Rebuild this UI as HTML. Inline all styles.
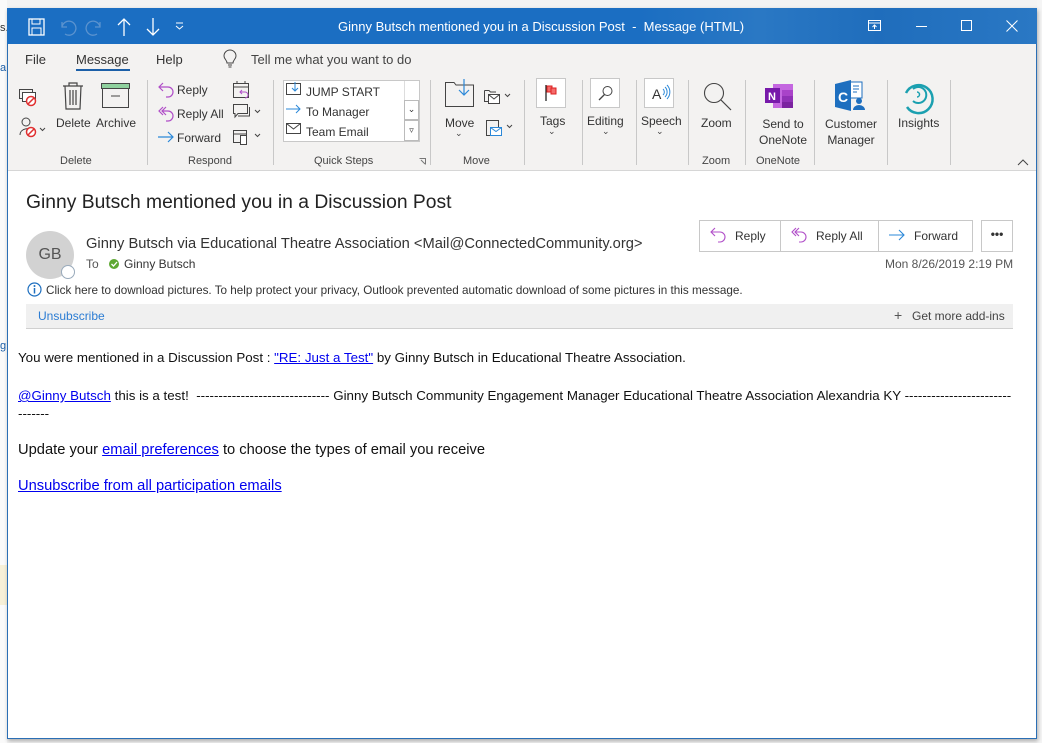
<!DOCTYPE html>
<html><head><meta charset="utf-8"><style>
*{margin:0;padding:0;box-sizing:border-box}
body{width:1042px;height:743px;overflow:hidden;background:#f3f3f3;font-family:"Liberation Sans",Arial,sans-serif;position:relative}
.a{position:absolute;white-space:nowrap}
.t{font-size:12px;color:#333}
.gl{font-size:11px;color:#444;top:155px}
.sep{position:absolute;top:80px;width:1px;height:85px;background:#c8c8c8}
svg{position:absolute;overflow:visible}
a{color:#0000ee}
</style></head><body>
<div class="a" style="left:0;top:0;width:7px;height:743px;background:#fafafa"></div>
<div class="a" style="left:0;top:22px;font-size:11px;color:#333">s.</div>
<div class="a" style="left:0;top:62px;font-size:11px;color:#1c5fa8">a</div>
<div class="a" style="left:0;top:340px;font-size:11px;color:#1c5fa8">g</div>
<div class="a" style="left:0;top:565px;width:7px;height:40px;background:#f7f0d8"></div>
<div class="a" style="left:1037px;top:0;width:5px;height:743px;background:#f5f5f5"></div>
<div class="a" style="left:7px;top:8px;width:1030px;height:731px;background:#fff;border:1px solid #2b6fb5;box-shadow:1px 2px 4px rgba(0,0,0,.3)"></div>
<div class="a" style="left:7px;top:8px;width:1030px;height:36px;background:#1b6ec2"></div>
<div class="a" style="left:640px;top:8px;width:397px;height:36px;background:linear-gradient(90deg,#1b6ec2,#2a78c4 30%,#1f6dbc 60%,#2a78c4)"></div>
<div class="a" style="left:338px;top:19px;font-size:13px;color:#fff">Ginny Butsch mentioned you in a Discussion Post&nbsp; - &nbsp;Message (HTML)</div>
<svg style="left:28px;top:18px" width="18" height="18"><rect x="1" y="1" width="15" height="16" fill="none" stroke="#fff" stroke-width="1.3"/><rect x="4" y="1" width="8" height="5" fill="none" stroke="#fff"/><rect x="4" y="10" width="9" height="7" fill="none" stroke="#fff"/></svg>
<svg style="left:58px;top:18px" width="18" height="18"><path d="M4 4 L4 9 L9 9 M4 9 A7 7 0 1 1 7 16" fill="none" stroke="#5b93cf" stroke-width="1.3"/></svg>
<svg style="left:86px;top:18px" width="18" height="18"><path d="M14 4 L14 9 L9 9 M14 9 A7 7 0 1 0 11 16" fill="none" stroke="#5b93cf" stroke-width="1.3"/></svg>
<svg style="left:116px;top:17px" width="16" height="20"><path d="M8 2 L8 19 M2 8 L8 2 L14 8" fill="none" stroke="#fff" stroke-width="1.3"/></svg>
<svg style="left:145px;top:17px" width="16" height="20"><path d="M8 1 L8 18 M2 12 L8 18 L14 12" fill="none" stroke="#fff" stroke-width="1.3"/></svg>
<svg style="left:175px;top:22px" width="10" height="8"><path d="M1 1 H8 M1 4 L4.5 7 L8 4" fill="none" stroke="#fff"/></svg>
<svg style="left:868px;top:20px" width="14" height="12"><rect x="0.5" y="0.5" width="12" height="10" fill="none" stroke="#fff"/><path d="M0.5 3 H12.5 M6.5 9 V5 M4.5 7 L6.5 5 L8.5 7" fill="none" stroke="#fff"/></svg>
<div class="a" style="left:916px;top:26px;width:11px;height:1px;background:#fff"></div>
<div class="a" style="left:961px;top:20px;width:11px;height:11px;border:1px solid #fff"></div>
<svg style="left:1006px;top:20px" width="12" height="12"><path d="M0.5 0.5 L11.5 11.5 M11.5 0.5 L0.5 11.5" stroke="#fff"/></svg>
<div class="a" style="left:8px;top:44px;width:1028px;height:127px;background:#f3f2f1;border-bottom:1px solid #d6d6d6"></div>
<div class="a" style="left:25px;top:52px;font-size:13px;color:#333">File</div>
<div class="a" style="left:76px;top:52px;font-size:13px;color:#333">Message</div>
<div class="a" style="left:76px;top:69px;width:54px;height:2px;background:#1b5fa8"></div>
<div class="a" style="left:156px;top:52px;font-size:13px;color:#333">Help</div>
<svg style="left:223px;top:51px" width="14" height="18"><path d="M4 12 C4 9 1 8 1 5 A6 6 0 0 1 13 5 C13 8 10 9 10 12 Z M5 14 H9 M5.5 16 H8.5" fill="none" stroke="#444"/></svg>
<div class="a" style="left:251px;top:52px;font-size:13px;color:#444">Tell me what you want to do</div>
<svg style="left:19px;top:89px" width="18" height="18"><rect x="0.5" y="0.5" width="13" height="9" fill="none" stroke="#444"/><rect x="3.5" y="3.5" width="13" height="9" fill="#fff" stroke="#444"/><circle cx="12" cy="12" r="4.5" fill="#fff" stroke="#e03030" stroke-width="1.5"/><path d="M9 15 L15 9" stroke="#e03030" stroke-width="1.5"/></svg>
<svg style="left:19px;top:117px" width="30" height="22"><circle cx="7" cy="5" r="4" fill="none" stroke="#444"/><path d="M1 18 C1 11 12 10 13 14" fill="none" stroke="#444"/><circle cx="12" cy="15" r="4.5" fill="#fff" stroke="#e03030" stroke-width="1.5"/><path d="M9 18 L15 12" stroke="#e03030" stroke-width="1.5"/><path d="M21 11 L23.5 13.5 L26 11" fill="none" stroke="#444"/></svg>
<svg style="left:61px;top:82px" width="24" height="28"><path d="M2 4 H22 M8 4 V1 H16 V4 M4 4 L5 27 H19 L20 4 M9 8 V23 M12 8 V23 M15 8 V23" fill="none" stroke="#444" stroke-width="1.2"/></svg>
<div class="a t" style="left:56px;top:116px">Delete</div>
<svg style="left:101px;top:83px" width="30" height="26"><rect x="0.5" y="0.5" width="28" height="5" fill="#8fd19e" stroke="#444"/><rect x="1.5" y="5.5" width="26" height="19" fill="none" stroke="#444"/><path d="M10 13 H19" stroke="#444"/></svg>
<div class="a t" style="left:96px;top:116px">Archive</div>
<div class="a gl" style="left:60px">Delete</div>
<div class="sep" style="left:147px"></div>
<svg style="left:157px;top:81px" width="18" height="18"><path d="M6 2 L2 6 L6 10 M2 6 H11 A5 5 0 0 1 11 16 H9" fill="none" stroke="#b04ec8" stroke-width="1.2"/></svg>
<div class="a t" style="left:177px;top:83px">Reply</div>
<svg style="left:157px;top:105px" width="18" height="18"><path d="M6 2 L2 6 L6 10 M9 2 L5 6 L9 10 M5 6 H11 A5 5 0 0 1 11 16 H9" fill="none" stroke="#b04ec8" stroke-width="1.2"/></svg>
<div class="a t" style="left:177px;top:107px">Reply All</div>
<svg style="left:157px;top:129px" width="18" height="16"><path d="M1 8 H16 M11 3 L16 8 L11 13" fill="none" stroke="#2b88d8" stroke-width="1.2"/></svg>
<div class="a t" style="left:177px;top:131px">Forward</div>
<svg style="left:233px;top:81px" width="18" height="18"><rect x="0.5" y="2.5" width="15" height="14" fill="none" stroke="#444"/><path d="M0.5 6 H15.5 M4 0 V3 M12 0 V3" stroke="#444"/><path d="M9 9 L7 11 L9 13 M7 11 H12 A3 3 0 0 1 12 17" fill="none" stroke="#b04ec8"/></svg>
<svg style="left:233px;top:104px" width="30" height="18"><path d="M0.5 0.5 H14.5 V9.5 H5 L2 13 V9.5 H0.5 Z M5 12 H16.5 V3" fill="none" stroke="#444"/><path d="M22 6 L24.5 8.5 L27 6" fill="none" stroke="#444"/></svg>
<svg style="left:233px;top:128px" width="30" height="18"><rect x="0.5" y="2.5" width="13" height="12" fill="none" stroke="#444"/><path d="M0.5 6 H13.5" stroke="#444"/><rect x="7.5" y="7.5" width="6" height="9" fill="#fff" stroke="#444"/><path d="M22 6 L24.5 8.5 L27 6" fill="none" stroke="#444"/></svg>
<div class="a gl" style="left:188px">Respond</div>
<div class="sep" style="left:273px"></div>
<div class="a" style="left:283px;top:80px;width:137px;height:62px;background:#fff;border:1px solid #c8c8c8"></div>
<div class="a" style="left:404px;top:81px;width:15px;height:60px;border-left:1px solid #ddd"></div>
<div class="a" style="left:404px;top:100px;width:15px;height:20px;border:1px solid #bbb;background:#fff;font-size:9px;text-align:center;line-height:16px;color:#333">⌄</div>
<div class="a" style="left:404px;top:120px;width:15px;height:21px;border:1px solid #bbb;background:#fff;font-size:9px;text-align:center;line-height:18px;color:#333">▿</div>
<svg style="left:286px;top:82px" width="16" height="14"><rect x="0.5" y="1.5" width="14" height="11" fill="none" stroke="#444"/><path d="M9 0 V9 M6 6 L9 9 L12 6" fill="none" stroke="#2b88d8"/></svg>
<div class="a t" style="left:306px;top:85px">JUMP START</div>
<svg style="left:286px;top:104px" width="16" height="10"><path d="M0 5 H14 M10 1 L14 5 L10 9" fill="none" stroke="#2b88d8"/></svg>
<div class="a t" style="left:306px;top:105px">To Manager</div>
<svg style="left:286px;top:123px" width="16" height="12"><rect x="0.5" y="0.5" width="14" height="10" fill="none" stroke="#444"/><path d="M0.5 0.5 L7.5 6 L14.5 0.5" fill="none" stroke="#444"/></svg>
<div class="a t" style="left:306px;top:125px">Team Email</div>
<div class="a gl" style="left:314px">Quick Steps</div>
<svg style="left:419px;top:158px" width="7" height="7"><path d="M0.5 0.5 H6.5 V6.5 M2 2 L6 6" fill="none" stroke="#777"/></svg>
<div class="sep" style="left:430px"></div>
<svg style="left:445px;top:79px" width="30" height="28"><path d="M0.5 3.5 H9 L11 6 H28.5 V27.5 H0.5 Z" fill="none" stroke="#444"/><path d="M19 0 V16 M14 11 L19 16 L24 11" fill="none" stroke="#2b88d8" stroke-width="1.2"/></svg>
<div class="a t" style="left:445px;top:116px">Move</div>
<div class="a" style="left:455px;top:128px;font-size:9px;color:#444">⌄</div>
<svg style="left:484px;top:88px" width="30" height="18"><path d="M0.5 2.5 H5 L6.5 4 H12 M0.5 2.5 V13.5 H4" fill="none" stroke="#444"/><rect x="4.5" y="6.5" width="11" height="9" fill="#fff" stroke="#444"/><path d="M4.5 6.5 L10 11 L15.5 6.5" fill="none" stroke="#444"/><path d="M21 6 L23.5 8.5 L26 6" fill="none" stroke="#444"/></svg>
<svg style="left:486px;top:119px" width="30" height="20"><rect x="0.5" y="1.5" width="12" height="15" fill="none" stroke="#444"/><rect x="4.5" y="8.5" width="11" height="8" fill="#fff" stroke="#2b88d8"/><path d="M4.5 8.5 L10 12.5 L15.5 8.5" fill="none" stroke="#2b88d8"/><path d="M21 6 L23.5 8.5 L26 6" fill="none" stroke="#444"/></svg>
<div class="a gl" style="left:463px">Move</div>
<div class="sep" style="left:524px"></div>
<div class="a" style="left:536px;top:78px;width:30px;height:30px;border:1px solid #c8c8c8;background:#fff"></div>
<svg style="left:545px;top:84px" width="14" height="18"><path d="M1 1 V17" stroke="#222" stroke-width="1.3"/><rect x="2" y="2" width="5" height="6" fill="#f46b6b" stroke="#d22"/><rect x="6" y="4" width="5" height="6" fill="#f46b6b" stroke="#d22"/></svg>
<div class="a t" style="left:540px;top:114px">Tags</div>
<div class="a" style="left:548px;top:126px;font-size:9px;color:#444">⌄</div>
<div class="sep" style="left:582px"></div>
<div class="a" style="left:590px;top:78px;width:30px;height:30px;border:1px solid #c8c8c8;background:#fff"></div>
<svg style="left:598px;top:85px" width="16" height="16"><circle cx="9.5" cy="6" r="4.5" fill="none" stroke="#444"/><path d="M6.5 9.5 L1 15" stroke="#444" stroke-width="1.3"/></svg>
<div class="a t" style="left:587px;top:114px">Editing</div>
<div class="a" style="left:602px;top:126px;font-size:9px;color:#444">⌄</div>
<div class="sep" style="left:636px"></div>
<div class="a" style="left:644px;top:78px;width:30px;height:30px;border:1px solid #c8c8c8;background:#fff"></div>
<div class="a" style="left:652px;top:86px;font-size:14px;color:#333">A</div>
<svg style="left:662px;top:85px" width="10" height="14"><path d="M1 4 A4 4 0 0 1 1 10 M3 2 A7 7 0 0 1 3 12 M5 0 A10 10 0 0 1 5 14" fill="none" stroke="#2b88d8"/></svg>
<div class="a t" style="left:641px;top:114px">Speech</div>
<div class="a" style="left:656px;top:126px;font-size:9px;color:#444">⌄</div>
<div class="sep" style="left:688px"></div>
<svg style="left:702px;top:82px" width="30" height="30"><circle cx="12" cy="11" r="9.5" fill="none" stroke="#444" stroke-width="1.1"/><path d="M19 18 L29 28" stroke="#444" stroke-width="1.2"/></svg>
<div class="a t" style="left:701px;top:116px">Zoom</div>
<div class="a gl" style="left:702px">Zoom</div>
<div class="sep" style="left:745px"></div>
<svg style="left:765px;top:84px" width="30" height="24"><rect x="8" y="0" width="20" height="24" fill="#c467e0"/><rect x="17" y="6" width="11" height="6" fill="#a943c9"/><rect x="17" y="12" width="11" height="6" fill="#9031b6"/><rect x="17" y="18" width="11" height="6" fill="#7b23a0"/><rect x="0" y="4" width="15" height="15" fill="#7719aa"/><text x="3" y="16" font-family="Liberation Sans" font-weight="bold" font-size="11" fill="#fff">N</text></svg>
<div class="a t" style="left:759px;top:116px;text-align:center;line-height:16px">Send to<br>OneNote</div>
<div class="a gl" style="left:756px">OneNote</div>
<div class="sep" style="left:814px"></div>
<svg style="left:835px;top:80px" width="32" height="32"><rect x="15" y="2" width="12" height="16" fill="#fff" stroke="#1e6fbf"/><path d="M18 6 H24 M18 9 H24 M18 12 H22" stroke="#1e6fbf"/><path d="M0 4 L16 0 V31 L0 27 Z" fill="#1e6fbf"/><text x="3" y="22" font-family="Liberation Sans" font-weight="bold" font-size="14" fill="#fff">C</text><circle cx="24" cy="21" r="3" fill="#1e6fbf"/><path d="M18 30 A6 5 0 0 1 30 30 Z" fill="#1e6fbf"/></svg>
<div class="a t" style="left:825px;top:116px;text-align:center;line-height:16px">Customer<br>Manager</div>
<div class="sep" style="left:887px"></div>
<svg style="left:903px;top:81px" width="32" height="32"><path d="M4 26 A14 14 0 1 0 3 12" fill="none" stroke="#1ba0b0" stroke-width="2.5"/><path d="M10 20 A8 8 0 1 0 10 8" fill="none" stroke="#1ba0b0" stroke-width="2"/><path d="M14 16 A2.5 2.5 0 1 0 14 11" fill="none" stroke="#1ba0b0" stroke-width="1.5"/></svg>
<div class="a t" style="left:898px;top:116px">Insights</div>
<div class="sep" style="left:950px"></div>
<svg style="left:1017px;top:159px" width="12" height="8"><path d="M1 6 L6 1 L11 6" fill="none" stroke="#444"/></svg>
<div class="a" style="left:26px;top:192px;font-size:19.3px;color:#222">Ginny Butsch mentioned you in a Discussion Post</div>
<div class="a" style="left:26px;top:231px;width:48px;height:48px;border-radius:50%;background:#d2d2d2;color:#555;font-size:16px;text-align:center;line-height:48px">GB</div>
<div class="a" style="left:61px;top:265px;width:14px;height:14px;border-radius:50%;background:#fff;border:1px solid #9ab"></div>
<div class="a" style="left:86px;top:236px;font-size:14.7px;color:#333">Ginny Butsch via Educational Theatre Association &lt;Mail@ConnectedCommunity.org&gt;</div>
<div class="a" style="left:86px;top:257px;font-size:12px;color:#555">To</div>
<div class="a" style="left:109px;top:259px;width:10px;height:10px;border-radius:50%;background:#5ea832"></div>
<svg style="left:111px;top:261px" width="7" height="6"><path d="M0.5 3 L2.5 5 L6 1" fill="none" stroke="#fff" stroke-width="1.3"/></svg>
<div class="a" style="left:124px;top:257px;font-size:12px;color:#333">Ginny Butsch</div>
<svg style="left:27px;top:282px" width="15" height="15"><circle cx="7.5" cy="7.5" r="6.5" fill="none" stroke="#1e6fbf" stroke-width="1.2"/><path d="M7.5 6 V11.5" stroke="#1e6fbf" stroke-width="1.5"/><circle cx="7.5" cy="4" r="1" fill="#1e6fbf"/></svg>
<div class="a" style="left:46px;top:284px;font-size:11.7px;color:#333">Click here to download pictures. To help protect your privacy, Outlook prevented automatic download of some pictures in this message.</div>
<div class="a" style="left:26px;top:304px;width:987px;height:25px;background:#f0f0f0;border-bottom:1px solid #d0d0d0"></div>
<div class="a" style="left:38px;top:309px;font-size:12px;color:#2b7cd3">Unsubscribe</div>
<div class="a" style="left:894px;top:307px;font-size:14px;color:#555">+</div>
<div class="a" style="left:912px;top:309px;font-size:12px;color:#444">Get more add-ins</div>
<div class="a" style="left:699px;top:220px;width:274px;height:32px;border:1px solid #c8c8c8;background:#fff"></div>
<div class="a" style="left:780px;top:221px;width:1px;height:30px;background:#c8c8c8"></div>
<div class="a" style="left:878px;top:221px;width:1px;height:30px;background:#c8c8c8"></div>
<svg style="left:710px;top:227px" width="18" height="16"><path d="M5 1 L1 5 L5 9 M1 5 H10 A5 5 0 0 1 10 15 H8" fill="none" stroke="#b04ec8" stroke-width="1.1"/></svg>
<div class="a t" style="left:735px;top:229px">Reply</div>
<svg style="left:791px;top:227px" width="18" height="16"><path d="M5 1 L1 5 L5 9 M8 1 L4 5 L8 9 M4 5 H10 A5 5 0 0 1 10 15 H8" fill="none" stroke="#b04ec8" stroke-width="1.1"/></svg>
<div class="a t" style="left:816px;top:229px">Reply All</div>
<svg style="left:889px;top:229px" width="18" height="12"><path d="M0 6 H15 M10 1 L15 6 L10 11" fill="none" stroke="#2b88d8" stroke-width="1.1"/></svg>
<div class="a t" style="left:914px;top:229px">Forward</div>
<div class="a" style="left:981px;top:220px;width:32px;height:32px;border:1px solid #c8c8c8;background:#fff;text-align:center;font-size:12px;line-height:26px;color:#333;font-weight:bold">•••</div>
<div class="a" style="left:885px;top:257px;font-size:12px;color:#555">Mon 8/26/2019 2:19 PM</div>
<div class="a" style="left:18px;top:350px;font-size:13.35px;color:#111">You were mentioned in a Discussion Post : <a href="#">"RE: Just a Test"</a> by Ginny Butsch in Educational Theatre Association.</div>
<div class="a" style="left:18px;top:388px;font-size:13.35px;color:#111"><a href="#">@Ginny Butsch</a> this is a test!&nbsp; ------------------------------ Ginny Butsch Community Engagement Manager Educational Theatre Association Alexandria KY ------------------------</div>
<div class="a" style="left:18px;top:406px;font-size:13.35px;color:#111">-------</div>
<div class="a" style="left:18px;top:442px;font-size:14.7px;color:#111">Update your <a href="#">email preferences</a> to choose the types of email you receive</div>
<div class="a" style="left:18px;top:478px;font-size:14.7px;color:#111"><a href="#">Unsubscribe from all participation emails</a></div>
</body></html>
